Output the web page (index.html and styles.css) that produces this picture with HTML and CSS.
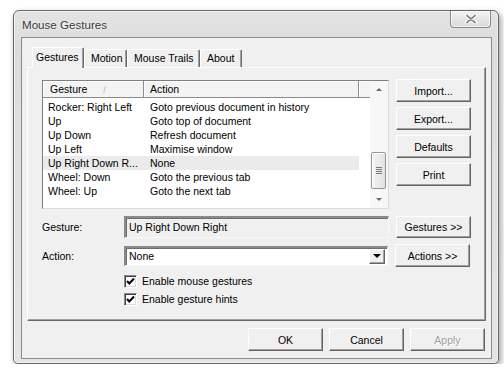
FILE: index.html
```html
<!DOCTYPE html>
<html>
<head>
<meta charset="utf-8">
<title>Mouse Gestures</title>
<link rel="stylesheet" href="styles.css">
</head>
<body>
<div class="window">
  <div class="titlebar">
    <span class="title">Mouse Gestures</span>
    <div class="close">
      <svg width="12" height="10" viewBox="0 0 12 10">
        <path d="M2 1.5 L10 8.5 M10 1.5 L2 8.5" stroke="#ffffff" stroke-width="4" stroke-linecap="round"/>
        <path d="M2 1.5 L10 8.5 M10 1.5 L2 8.5" stroke="#8f8f8f" stroke-width="2" stroke-linecap="round"/>
      </svg>
    </div>
  </div>
  <div class="client">
    <div class="tabs">
      <div class="tab active">Gestures</div>
      <div class="tab w-motion">Motion</div>
      <div class="tab w-trails">Mouse Trails</div>
      <div class="tab w-about">About</div>
    </div>
    <div class="panel">
      <div class="top">
        <div class="list">
          <div class="list-main">
            <div class="header">
              <div class="hcell c1">Gesture<span class="sort">/</span></div>
              <div class="hcell c2">Action</div>
              <div class="hcell rest"></div>
            </div>
            <div class="rows">
              <div class="row"><span class="c1">Rocker: Right Left</span><span class="c2">Goto previous document in history</span></div>
              <div class="row"><span class="c1">Up</span><span class="c2">Goto top of document</span></div>
              <div class="row"><span class="c1">Up Down</span><span class="c2">Refresh document</span></div>
              <div class="row"><span class="c1">Up Left</span><span class="c2">Maximise window</span></div>
              <div class="row selected"><span class="c1">Up Right Down R...</span><span class="c2">None</span></div>
              <div class="row"><span class="c1">Wheel: Down</span><span class="c2">Goto the previous tab</span></div>
              <div class="row"><span class="c1">Wheel: Up</span><span class="c2">Goto the next tab</span></div>
            </div>
          </div>
          <div class="scrollbar">
            <div class="sb-btn"><span class="arrow-up"></span></div>
            <div class="sb-track">
              <div class="thumb"><span class="grip"></span></div>
            </div>
            <div class="sb-btn"><span class="arrow-down"></span></div>
          </div>
        </div>
        <div class="side">
          <div class="btn">Import...</div>
          <div class="btn">Export...</div>
          <div class="btn">Defaults</div>
          <div class="btn">Print</div>
        </div>
      </div>
      <div class="field-row gesture-row">
        <span class="label">Gesture:</span>
        <div class="textbox">Up Right Down Right</div>
        <div class="btn side-btn">Gestures &gt;&gt;</div>
      </div>
      <div class="field-row action-row">
        <span class="label">Action:</span>
        <div class="combo">
          <span class="combo-text">None</span>
          <div class="combo-btn"><span class="arrow-down dark"></span></div>
        </div>
        <div class="btn side-btn">Actions &gt;&gt;</div>
      </div>
      <div class="check-row first">
        <span class="checkbox"><svg width="9" height="9" viewBox="0 0 9 9"><polyline points="1,4 3.3,6.5 8,1.5" fill="none" stroke="#000" stroke-width="2"/></svg></span>
        <span>Enable mouse gestures</span>
      </div>
      <div class="check-row">
        <span class="checkbox"><svg width="9" height="9" viewBox="0 0 9 9"><polyline points="1,4 3.3,6.5 8,1.5" fill="none" stroke="#000" stroke-width="2"/></svg></span>
        <span>Enable gesture hints</span>
      </div>
    </div>
    <div class="dialog-buttons">
      <div class="btn dlg">OK</div>
      <div class="btn dlg">Cancel</div>
      <div class="btn dlg disabled">Apply</div>
    </div>
  </div>
</div>
</body>
</html>
```
FILE: styles.css
```css
* { box-sizing: border-box; }

body {
  margin: 0;
  background: #ffffff;
  font-family: "Liberation Sans", Arial, sans-serif;
  font-size: 10.5px;
  color: #000;
}

.window {
  margin: 10px 0 0 13px;
  width: 486px;
  height: 354px;
  border: 1px solid #666666;
  border-radius: 6px 6px 5px 5px;
  background: linear-gradient(#e3e3e3, #dcdcdc 40px, #e4e4e4);
  box-shadow: 2px 3px 6px rgba(0, 0, 0, 0.38), inset 0 0 0 1px rgba(255, 255, 255, 0.55);
  padding: 0 6px 4px 7px;
  display: flex;
  flex-direction: column;
}

.titlebar {
  height: 26px;
  display: flex;
  align-items: center;
  flex-shrink: 0;
}

.title {
  padding-left: 1px;
  font-size: 11.6px;
  color: #3a3a3a;
  text-shadow: 0 0 3px #fff;
}

.close {
  margin-left: auto;
  margin-right: 1px;
  align-self: flex-start;
  width: 41px;
  height: 17px;
  border: 1px solid #8a8a8a;
  border-top: none;
  border-radius: 0 0 4px 4px;
  background: linear-gradient(#f2f2f2, #dadada);
  box-shadow: inset 0 0 0 1px rgba(255, 255, 255, 0.6);
  display: flex;
  align-items: center;
  justify-content: center;
}

.client {
  width: 471px;
  height: 322px;
  border: 1px solid #8c8c8c;
  background: #f0f0f0;
  padding: 9px 5px 7px 5px;
  display: flex;
  flex-direction: column;
}

.tabs {
  height: 20px;
  display: flex;
  align-items: flex-end;
  padding-left: 5px;
  flex-shrink: 0;
}

.tab {
  height: 18px;
  line-height: 17px;
  padding-left: 6px;
  border-top: 1px solid #ffffff;
  border-left: 1px solid #ffffff;
  border-right: 1px solid #6a6a6a;
  border-radius: 2px 2px 0 0;
  box-shadow: inset -1px 0 #a0a0a0;
  background: #f0f0f0;
  white-space: nowrap;
}

.tab.active {
  width: 52px;
  height: 21px;
  line-height: 19px;
  padding-left: 3px;
  margin-bottom: -1px;
  position: relative;
  z-index: 1;
}

.w-motion { width: 43px; }
.w-trails { width: 73px; }
.w-about { width: 42px; }

.panel {
  height: 254px;
  border-top: 1px solid #ffffff;
  border-left: 1px solid #ffffff;
  border-right: 1px solid #6a6a6a;
  border-bottom: 1px solid #6a6a6a;
  box-shadow: inset -1px -1px #a0a0a0;
  padding: 12px 0 0 14px;
  flex-shrink: 0;
}

.top {
  display: flex;
  align-items: flex-start;
}

.list {
  width: 347px;
  height: 129px;
  border-top: 1px solid #7f7f7f;
  border-left: 1px solid #7f7f7f;
  border-right: 1px solid #dcdcdc;
  border-bottom: 1px solid #dcdcdc;
  background: #ffffff;
  display: flex;
}

.list-main {
  width: 327px;
}

.header {
  display: flex;
  height: 17px;
  line-height: 16px;
}

.hcell {
  background: #f3f3f3;
  border-bottom: 1px solid #8c8c8c;
  border-right: 1px solid #8c8c8c;
  box-shadow: inset 1px 1px #ffffff;
  white-space: nowrap;
}

.hcell.c1 { width: 101px; padding-left: 7px; }
.hcell.c2 { width: 215px; padding-left: 6px; }
.hcell.rest { flex: 1; border-right: none; }

.sort {
  margin-left: 16px;
  color: #b4b4b4;
  font-size: 9px;
}

.rows {
  padding-top: 2px;
}

.row {
  display: flex;
  width: 316px;
  height: 14px;
  line-height: 14px;
  white-space: nowrap;
}

.row .c1 { width: 101px; padding-left: 5px; }
.row .c2 { width: 215px; padding-left: 6px; }

.row.selected { background: #ebebeb; }

.scrollbar {
  width: 18px;
  display: flex;
  flex-direction: column;
  background: #f7f7f7;
}

.sb-btn {
  height: 17px;
  display: flex;
  align-items: center;
  justify-content: center;
  flex-shrink: 0;
}

.arrow-up {
  width: 0;
  height: 0;
  border-left: 3px solid transparent;
  border-right: 3px solid transparent;
  border-bottom: 3px solid #6a6a6a;
}

.arrow-down {
  width: 0;
  height: 0;
  border-left: 3px solid transparent;
  border-right: 3px solid transparent;
  border-top: 3px solid #6a6a6a;
}

.arrow-down.dark {
  border-left-width: 4px;
  border-right-width: 4px;
  border-top: 4px solid #000;
}

.sb-track {
  flex: 1;
  padding: 0 2px 0 1px;
}

.thumb {
  margin-top: 54px;
  height: 37px;
  border: 1px solid #959595;
  border-radius: 2px;
  background: linear-gradient(90deg, #f4f4f4, #e2e2e2);
  box-shadow: inset 1px 1px #ffffff;
  display: flex;
  align-items: center;
  justify-content: center;
}

.grip {
  width: 6px;
  height: 7px;
  background: repeating-linear-gradient(#7c7c7c 0 1px, transparent 1px 2px);
}

.side {
  margin-left: 7px;
  margin-top: -1px;
  display: flex;
  flex-direction: column;
  gap: 5px;
}

.btn {
  width: 75px;
  height: 23px;
  display: flex;
  align-items: center;
  justify-content: center;
  background: #f0f0f0;
  border-top: 1px solid #ffffff;
  border-left: 1px solid #ffffff;
  border-right: 1px solid #646464;
  border-bottom: 1px solid #646464;
  box-shadow: inset -1px -1px #a0a0a0;
  white-space: nowrap;
}

.field-row {
  display: flex;
  align-items: center;
}

.gesture-row {
  margin-top: 7px;
  height: 22px;
}

.action-row {
  margin-top: 6px;
  height: 23px;
}

.label {
  width: 82px;
  flex-shrink: 0;
}

.textbox {
  width: 265px;
  height: 22px;
  line-height: 18px;
  padding-left: 3px;
  border-top: 2px solid #8a8a8a;
  border-left: 2px solid #8a8a8a;
  border-right: 1px solid #f8f8f8;
  border-bottom: 1px solid #f8f8f8;
  box-shadow: inset 1px 1px #6e6e6e;
  background: #f0f0f0;
}

.side-btn {
  margin-left: 7px;
  height: 22px;
}

.action-row .side-btn { height: 23px; }

.combo {
  width: 264px;
  height: 20px;
  border-top: 2px solid #8a8a8a;
  border-left: 2px solid #8a8a8a;
  border-right: 1px solid #f8f8f8;
  border-bottom: 1px solid #f8f8f8;
  box-shadow: inset 1px 1px #6e6e6e;
  background: #ffffff;
  display: flex;
  align-items: center;
  padding-right: 2px;
}

.combo-text {
  flex: 1;
  padding-left: 3px;
}

.combo-btn {
  width: 16px;
  height: 15px;
  background: #f0f0f0;
  border-top: 1px solid #ffffff;
  border-left: 1px solid #ffffff;
  border-right: 1px solid #646464;
  border-bottom: 1px solid #646464;
  box-shadow: inset -1px -1px #a0a0a0;
  display: flex;
  align-items: center;
  justify-content: center;
}

.check-row {
  height: 18px;
  display: flex;
  align-items: center;
  padding-left: 82px;
}

.check-row.first { margin-top: 5px; }

.checkbox {
  width: 13px;
  height: 13px;
  margin-right: 5px;
  background: #ffffff;
  border-top: 1px solid #8a8a8a;
  border-left: 1px solid #8a8a8a;
  border-right: 1px solid #ffffff;
  border-bottom: 1px solid #ffffff;
  box-shadow: inset 1px 1px #404040, inset -1px -1px #dcdcdc;
  display: flex;
  align-items: center;
  justify-content: center;
}

.dialog-buttons {
  margin-top: 7px;
  margin-right: 1px;
  display: flex;
  justify-content: flex-end;
  gap: 6px;
}

.btn.dlg { height: 23px; }

.btn.disabled {
  color: #a0a0a0;
  text-shadow: 1px 1px #ffffff;
}
```
